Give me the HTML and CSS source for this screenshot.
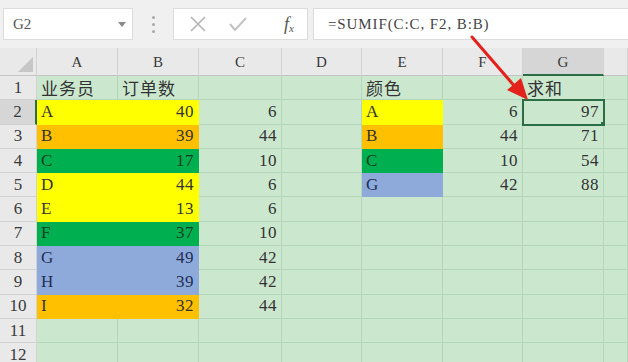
FILE: index.html
```
<!DOCTYPE html>
<html lang="zh-CN">
<head>
    <meta charset="UTF-8">
    <title>SUMIF</title>
    <link rel="stylesheet" href="styles.css">
</head>
<body>
    <div class="toolbar">
        <div class="namebox">
            <span>G2</span>
            <svg class="caret" width="8" height="5" viewBox="0 0 8 5"><path d="M0 0h8L4 5z" fill="#8a8a8a"/></svg>
        </div>
        <div class="grip"><i></i><i></i><i></i></div>
        <div class="fbtns">
            <svg width="18" height="18" viewBox="0 0 18 18"><path d="M2 2L16 16M16 2L2 16" stroke="#b4b4b4" stroke-width="1.6"/></svg>
            <svg width="20" height="18" viewBox="0 0 20 18"><path d="M2 9l5 6L18 3" stroke="#c2c2c2" stroke-width="2" fill="none"/></svg>
            <span class="fx">f<sub>x</sub></span>
        </div>
        <div class="formula">=SUMIF(C:C, F2, B:B)</div>
    </div>

    <table class="sheet">
        <colgroup>
            <col class="c-row"><col class="c-a"><col class="c-b"><col class="c-c">
            <col class="c-d"><col class="c-e"><col class="c-f"><col class="c-g"><col class="c-h">
        </colgroup>
        <tr class="head">
            <th class="corner"><span class="tri"></span></th>
            <th>A</th><th>B</th><th>C</th><th>D</th><th>E</th><th>F</th><th class="on">G</th><th></th>
        </tr>
        <tr>
            <th>1</th>
            <td class="zh">业务员</td><td class="zh">订单数</td><td></td><td></td>
            <td class="zh">颜色</td><td></td><td class="zh">求和</td><td></td>
        </tr>
        <tr>
            <th class="on">2</th>
            <td class="yel">A</td><td class="yel num">40</td><td class="num">6</td><td></td>
            <td class="yel">A</td><td class="num">6</td><td class="num sel">97</td><td></td>
        </tr>
        <tr>
            <th>3</th>
            <td class="org">B</td><td class="org num">39</td><td class="num">44</td><td></td>
            <td class="org">B</td><td class="num">44</td><td class="num">71</td><td></td>
        </tr>
        <tr>
            <th>4</th>
            <td class="grn">C</td><td class="grn num">17</td><td class="num">10</td><td></td>
            <td class="grn">C</td><td class="num">10</td><td class="num">54</td><td></td>
        </tr>
        <tr>
            <th>5</th>
            <td class="yel">D</td><td class="yel num">44</td><td class="num">6</td><td></td>
            <td class="blu">G</td><td class="num">42</td><td class="num">88</td><td></td>
        </tr>
        <tr>
            <th>6</th>
            <td class="yel">E</td><td class="yel num">13</td><td class="num">6</td><td></td>
            <td></td><td></td><td></td><td></td>
        </tr>
        <tr>
            <th>7</th>
            <td class="grn">F</td><td class="grn num">37</td><td class="num">10</td><td></td>
            <td></td><td></td><td></td><td></td>
        </tr>
        <tr>
            <th>8</th>
            <td class="blu">G</td><td class="blu num">49</td><td class="num">42</td><td></td>
            <td></td><td></td><td></td><td></td>
        </tr>
        <tr>
            <th>9</th>
            <td class="blu">H</td><td class="blu num">39</td><td class="num">42</td><td></td>
            <td></td><td></td><td></td><td></td>
        </tr>
        <tr>
            <th>10</th>
            <td class="org">I</td><td class="org num">32</td><td class="num">44</td><td></td>
            <td></td><td></td><td></td><td></td>
        </tr>
        <tr>
            <th>11</th>
            <td></td><td></td><td></td><td></td><td></td><td></td><td></td><td></td>
        </tr>
        <tr>
            <th>12</th>
            <td></td><td></td><td></td><td></td><td></td><td></td><td></td><td></td>
        </tr>
    </table>

    <!-- red pointer drawn over the grid -->
    <svg class="arrow" width="628" height="362" viewBox="0 0 628 362">
        <path d="M472 37L517 89" stroke="#e3221c" stroke-width="3" stroke-linecap="round"/>
        <path d="M528 100L507 90L521 78z" fill="#e3221c"/>
    </svg>
</body>
</html>
```

FILE: styles.css
```
body {
    margin: 0;
    width: 628px;
    height: 362px;
    overflow: hidden;
    position: relative;
    background-color: #cbe8ce;
    font-family: "Liberation Serif", "Noto Sans CJK SC", serif;
    color: #333;
}

/* Formula bar */
.toolbar {
    display: flex;
    align-items: center;
    height: 48px;
    padding-left: 3px;
    background-color: #f0f0f0;
    box-sizing: border-box;
}

.namebox {
    width: 130px;
    height: 32px;
    box-sizing: border-box;
    background-color: #fff;
    border: 1px solid #dcdcdc;
    display: flex;
    align-items: center;
    justify-content: space-between;
    padding: 0 6px 0 9px;
    font-size: 15px;
    color: #555;
}

.caret {
    margin-top: 1px;
}

.grip {
    width: 40px;
    display: flex;
    flex-direction: column;
    align-items: center;
    gap: 4px;
}

.grip i {
    width: 3px;
    height: 3px;
    border-radius: 50%;
    background-color: #a8a8a8;
}

.fbtns {
    width: 135px;
    height: 32px;
    box-sizing: border-box;
    background-color: #fff;
    border: 1px solid #dcdcdc;
    display: flex;
    align-items: center;
    padding-left: 15px;
    gap: 21px;
}

.fx {
    margin-left: 15px;
    font-style: italic;
    font-size: 18px;
    color: #555;
    line-height: 1;
}

.fx sub {
    font-size: 11px;
    vertical-align: -2px;
}

.formula {
    margin-left: 5px;
    flex: 1;
    height: 32px;
    box-sizing: border-box;
    background-color: #fff;
    border: 1px solid #dcdcdc;
    border-right: none;
    padding-left: 14px;
    font-size: 15px;
    letter-spacing: 0.9px;
    line-height: 30px;
    color: #444;
}

/* Grid */
.sheet {
    table-layout: fixed;
    border-collapse: separate;
    border-spacing: 0;
    width: 628px;
}

.c-row { width: 37px; }
.c-a { width: 81px; }
.c-b { width: 81px; }
.c-c { width: 83px; }
.c-d { width: 80px; }
.c-e { width: 81px; }
.c-f { width: 80px; }
.c-g { width: 81px; }
.c-h { width: 24px; }

.sheet tr {
    height: 24.3px;
}

.sheet td,
.sheet th {
    padding: 0 4px;
    border-right: 1px solid #b6d6b9;
    border-bottom: 1px solid #b6d6b9;
    font-size: 17px;
    white-space: nowrap;
    overflow: hidden;
    box-sizing: border-box;
}

.sheet td.num {
    letter-spacing: 0.5px;
}

.sheet th {
    background-color: #e9e9e9;
    border-color: #d2d2d2;
    font-weight: normal;
    text-align: center;
    color: #3a3a3a;
}

.sheet tr th:first-child {
    padding: 0;
}

.sheet tr.head {
    height: 28px;
}

.sheet tr.head th {
    font-size: 15px;
    border-bottom-color: #c4c4c4;
    padding-top: 2px;
}

.sheet th.on {
    background-color: #d6d6d6;
}

.sheet tr.head th.on {
    border-bottom: 2px solid #2b6e45;
}

.sheet tr th.on:first-child {
    border-right: 2px solid #2b6e45;
}

.corner {
    position: relative;
}

.tri {
    position: absolute;
    right: 3px;
    bottom: 3px;
    width: 0;
    height: 0;
    border-left: 15px solid transparent;
    border-bottom: 15px solid #c6c6c6;
}

.num {
    text-align: right;
}

.zh {
    font-family: "Noto Sans CJK SC", sans-serif;
    font-size: 17px;
    letter-spacing: 1px;
    vertical-align: bottom;
    line-height: 22px;
}

.yel { background-color: #ffff00; border-color: #ffff00 !important; }
.org { background-color: #ffc000; border-color: #ffc000 !important; }
.grn { background-color: #00b050; border-color: #00b050 !important; color: #143d24; }
.blu { background-color: #8eaadb; border-color: #8eaadb !important; color: #1f2f55; }

.sel {
    position: relative;
    outline: 2px solid #2b6e45;
    outline-offset: -1px;
}

.sel::after {
    content: "";
    position: absolute;
    right: -4px;
    bottom: -4px;
    width: 5px;
    height: 5px;
    background-color: #2b6e45;
    border: 1px solid #cbe8ce;
}

.arrow {
    position: absolute;
    left: 0;
    top: 0;
    pointer-events: none;
}
```
